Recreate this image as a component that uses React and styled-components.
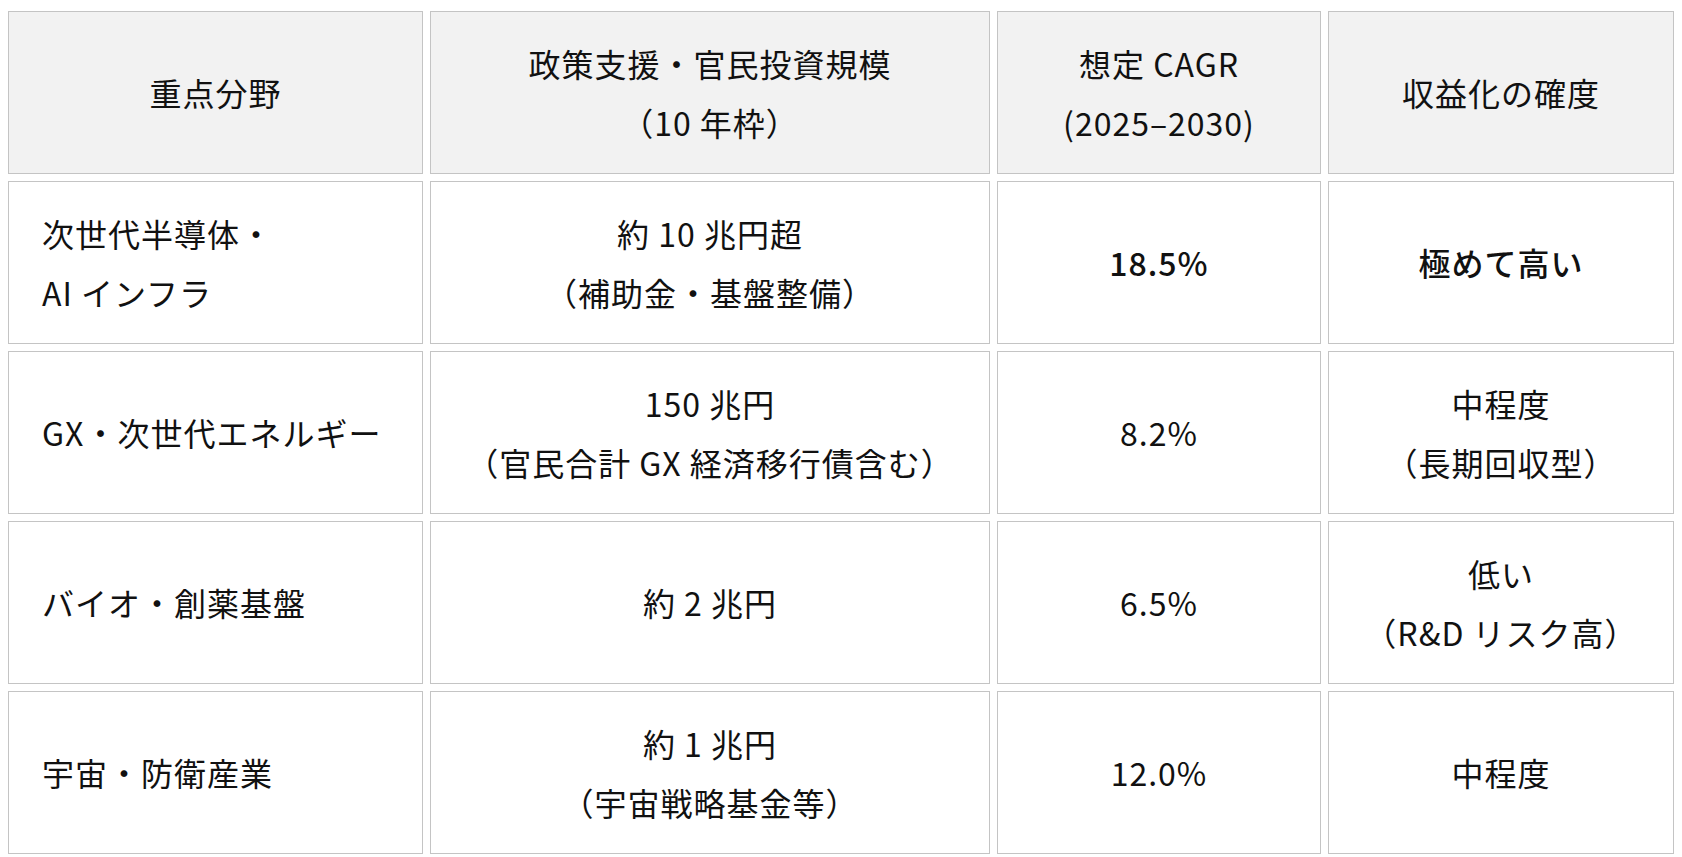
import React from 'react'
import styled, { createGlobalStyle } from 'styled-components'

const GlobalStyle = createGlobalStyle`
  body {
    margin: 0;
    background: #fff;
    color: #111;
    font-family: "Noto Sans CJK JP", sans-serif;
  }
`

const Table = styled.table`
  width: calc(100% - 2px);
  margin: 4px 1px 0;
  table-layout: fixed;
  border-collapse: separate;
  border-spacing: 7px;
  font-size: 32px;
  line-height: 59px;
  letter-spacing: 1px;
`

const HeadCell = styled.th`
  height: 161px;
  padding: 0 16px;
  border: 1px solid #c4c4c4;
  background: #f2f2f2;
  font-weight: 400;
  text-align: center;
  vertical-align: middle;
`

const Cell = styled.td`
  height: 161px;
  padding: 0 ${props => (props.$align === 'left' ? '33px' : '16px')};
  border: 1px solid #c4c4c4;
  background: #fff;
  font-weight: ${props => (props.$strong ? 500 : 400)};
  text-align: ${props => props.$align || 'center'};
  vertical-align: middle;
`

const columns = [415, 560, 324, 346]

const headers = [
  ['重点分野'],
  ['政策支援・官民投資規模', '（10 年枠）'],
  ['想定 CAGR', '(2025–2030)'],
  ['収益化の確度']
]

const rows = [
  {
    field: ['次世代半導体・', 'AI インフラ'],
    scale: ['約 10 兆円超', '（補助金・基盤整備）'],
    cagr: '18.5%',
    certainty: ['極めて高い'],
    strong: true
  },
  {
    field: ['GX・次世代エネルギー'],
    scale: ['150 兆円', '（官民合計 GX 経済移行債含む）'],
    cagr: '8.2%',
    certainty: ['中程度', '（長期回収型）']
  },
  {
    field: ['バイオ・創薬基盤'],
    scale: ['約 2 兆円'],
    cagr: '6.5%',
    certainty: ['低い', '（R&D リスク高）']
  },
  {
    field: ['宇宙・防衛産業'],
    scale: ['約 1 兆円', '（宇宙戦略基金等）'],
    cagr: '12.0%',
    certainty: ['中程度']
  }
]

const Lines = ({ lines }) =>
  lines.map((line, i) => (
    <React.Fragment key={i}>
      {i > 0 && <br />}
      {line}
    </React.Fragment>
  ))

const App = () => (
  <>
    <GlobalStyle />
    <Table>
      <colgroup>
        {columns.map(w => (
          <col key={w} style={{ width: `${w}px` }} />
        ))}
      </colgroup>
      <thead>
        <tr>
          {headers.map(h => (
            <HeadCell key={h[0]}>
              <Lines lines={h} />
            </HeadCell>
          ))}
        </tr>
      </thead>
      <tbody>
        {rows.map(row => (
          <tr key={row.cagr}>
            <Cell $align="left">
              <Lines lines={row.field} />
            </Cell>
            <Cell>
              <Lines lines={row.scale} />
            </Cell>
            <Cell $strong={row.strong}>{row.cagr}</Cell>
            <Cell $strong={row.strong}>
              <Lines lines={row.certainty} />
            </Cell>
          </tr>
        ))}
      </tbody>
    </Table>
  </>
)

export default App
